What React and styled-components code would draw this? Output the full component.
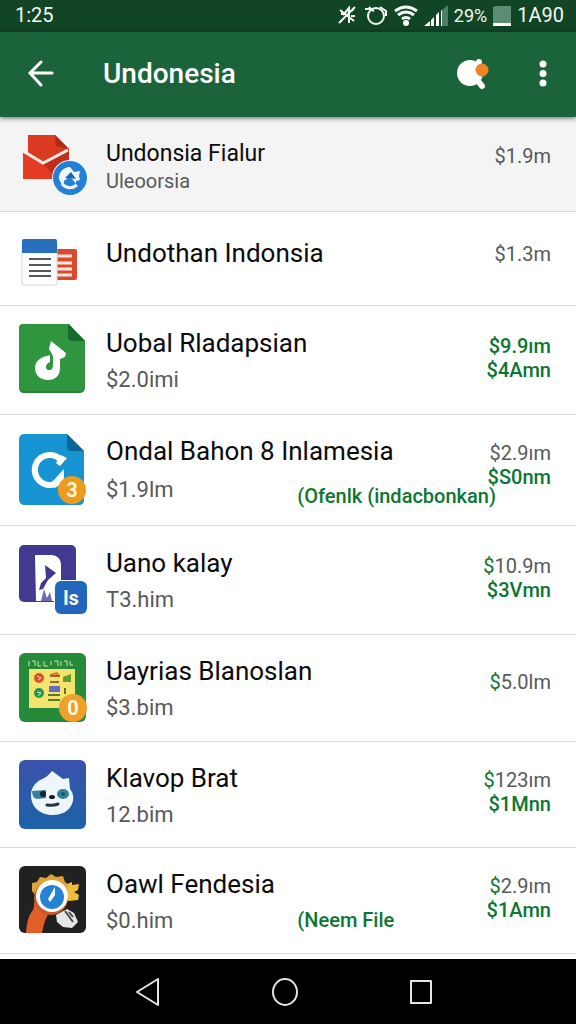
import styled, { createGlobalStyle, css } from 'styled-components';

const palette = {
  status: '#124426',
  header: '#1b643b',
  line: '#d8d9da',
  text: '#0b0b0b',
  sub: '#58595b',
  green: '#0b7632',
};

// icons
const MailIcon = () => (
  <Picture viewBox="0 0 72 72" aria-hidden="true">
    <path d="M10 1h27l14 14v24H10z" fill="#dc3a20" />
    <path d="M37 1l14 14-13-3z" fill="#a92c1b" />
    <path d="M5 17l20 13 26-14v29H5z" fill="#e33c22" />
    <path d="M25 30l26-14v29H39z" fill="#c12f1c" />
    <path d="M5 17l20 12 25-13" fill="none" stroke="#fbeeea" strokeWidth="3" />
    <circle cx="52" cy="44" r="18" fill="#f4f4f5" />
    <circle cx="52" cy="44" r="17" fill="#2380d6" />
    <path d="M41 45a11 11 0 0 1 11-12l4 5 6-1-1 5 1 4-4 1v3l-6-8-6 5-1 6z" fill="#eef8ff" />
    <path d="M44 50q7 7 15 1" fill="none" stroke="#eef8ff" strokeWidth="3" />
    <path d="M47 44l6-6 5 7-6-1z" fill="#1b64b4" />
  </Picture>
);

const NewsIcon = () => (
  <Picture viewBox="0 0 72 72" aria-hidden="true">
    <rect x="34" y="20" width="25" height="31" rx="2" fill="#d74a2d" />
    <path d="M38 27h16M38 34h16M38 40h16M38 46h16" stroke="#fbe6df" strokeWidth="3" />
    <rect x="4" y="11" width="35" height="45" rx="2" fill="#fff" stroke="#d5d7d9" />
    <path d="M4 12q0-2 2-2h31q2 0 2 2v12H4z" fill="#286fbd" />
    <path d="M11 30h22M11 36h22M11 42h22M11 47h22" stroke="#55585c" strokeWidth="2" />
  </Picture>
);

const MusicIcon = () => (
  <Picture viewBox="0 0 72 72" aria-hidden="true">
    <path d="M5 1h46l16 17v46q0 6-6 6H6q-5 0-5-6V6q0-5 4-5z" fill="#258237" />
    <path d="M5 1h45l17 17v45q0 5-5 5H6q-5 0-5-5V6q0-5 4-5z" fill="#2f963f" />
    <path d="M50 1l17 17H54q-4 0-4-4z" fill="#18692b" />
    <path
      d="M33 18l15 12-1 4-5 2v9c0 8-5 12-12 12-8 0-13-5-13-12 0-6 5-11 12-12l3-1v7c-3 1-4 3-4 5 0 2 1 3 3 3 3 0 4-2 4-5V33l-4-7z"
      fill="#fff"
    />
  </Picture>
);

const SyncIcon = () => (
  <Picture viewBox="0 0 72 72" aria-hidden="true">
    <path d="M6 2h43l17 17v49q0 5-5 5H7q-6 0-6-6V8q0-6 5-6z" fill="#1695d2" />
    <path d="M49 2l17 17H53q-4 0-4-4z" fill="#0a6795" />
    <path d="M43 28a15 15 0 1 0-6 24" fill="none" stroke="#fff" strokeWidth="6" />
    <path d="M43 23l6 3-7 8-4-3zM46 37v13l-9 6-5-4z" fill="#fff" />
    <circle cx="54" cy="58" r="14" fill="#eb9b20" />
    <BadgeText x="54" y="65" textAnchor="middle">3</BadgeText>
  </Picture>
);

const RibbonIcon = () => (
  <Picture viewBox="0 0 72 72" aria-hidden="true">
    <rect x="1" y="2" width="57" height="57" rx="5" fill="#403b91" />
    <path d="M17 12h15c8 0 11 4 11 11v35H18z" fill="#fff" />
    <path d="M27 22l11 8-8 7-5 9-4 1 2-7 5-5z" fill="#403b91" />
    <path d="M26 46l-3 12h11l-2-9-3 6z" fill="#6f6cb0" />
    <rect x="36" y="37" width="34" height="35" rx="7" fill="#f4f7fc" />
    <rect x="37" y="38" width="32" height="33" rx="6" fill="#2168bd" />
    <BadgeText x="53" y="62" textAnchor="middle">ls</BadgeText>
  </Picture>
);

const BoardIcon = () => (
  <Picture viewBox="0 0 72 72" aria-hidden="true">
    <rect x="1" y="1" width="67" height="69" rx="6" fill="#268a3a" />
    <path d="M11 9v5M14 9h3v5M20 9v5h3M26 9v5h4M33 9v4M36 9h4v5M43 9v5M46 9h3v5M52 9v4h3" fill="none" stroke="#c9e6b4" />
    <rect x="11" y="17" width="46" height="39" fill="#f3e36f" />
    <circle cx="21" cy="26" r="5" fill="#d95125" />
    <circle cx="21" cy="41" r="5" fill="#249457" />
    <path d="M19 24l4 2-3 2M19 40l4 1-3 3" stroke="#f7e6b1" fill="none" />
    <path d="M32 22l7-2 3 3-10 1z" fill="#df7b28" />
    <path d="M32 24h10M32 30h9" stroke="#9b642e" strokeWidth="2" />
    <path d="M45 25l8-3v8h-8z" fill="#5aa22c" />
    <rect x="31" y="34" width="11" height="6" fill="#656bc0" />
    <path d="M30 43h12M30 48h12M47 36v6" stroke="#5c752f" strokeWidth="2" />
    <circle cx="55" cy="56" r="14" fill="#eda02a" />
    <BadgeText x="55" y="63" textAnchor="middle">0</BadgeText>
  </Picture>
);

const SlothIcon = () => (
  <Picture viewBox="0 0 72 72" aria-hidden="true">
    <defs>
      <linearGradient id="sloth" x1="0" y1="0" x2="0" y2="1">
        <stop offset="0" stopColor="#3c52ab" />
        <stop offset="1" stopColor="#1c63a9" />
      </linearGradient>
    </defs>
    <rect x="1" y="1" width="67" height="69" rx="6" fill="url(#sloth)" />
    <path d="M34 12l11 8 6-1 1 11c4 5 4 10 2 15-3 7-10 11-19 11-12 0-22-7-22-20 0-7 4-12 9-15 5-2 8-4 12-9z" fill="#edf7fb" />
    <path d="M14 32l14-1v8l-9 1q-5-1-5-8z" fill="#367e9b" />
    <ellipse cx="45" cy="35" rx="6" ry="5" fill="#347f9e" />
    <circle cx="25" cy="35" r="3" fill="#14232f" />
    <circle cx="45" cy="35" r="2" fill="#1b5876" />
    <ellipse cx="34" cy="38" rx="3" ry="2" fill="#101820" />
    <path d="M29 46q6 1 11-1" fill="none" stroke="#26363f" strokeWidth="3" strokeLinecap="round" />
  </Picture>
);

const CompassIcon = () => (
  <Picture viewBox="0 0 72 72" aria-hidden="true">
    <rect x="1" y="1" width="67" height="67" rx="6" fill="#202120" />
    <path d="M18 33c-3 4-1 9-3 12-5 6-6 13-7 23h16c2-9 3-14 7-20z" fill="#e35d29" />
    <path d="M14 26v-8l5-1 3-5 6 1 5-4 5 3 7-1 2 6 5 4v12H20z" fill="#e0a33a" />
    <path d="M49 19l5-2v3l7-1-1 6-4 2 5 3-1 5-10 1z" fill="#edbd3c" />
    <path d="M38 50l11-6 7 4 4 9-6 6-9-1-6-5z" fill="#e7e7e6" />
    <path d="M47 46l8 11M51 47l4 5" stroke="#4a4a4a" strokeWidth="2" />
    <circle cx="33" cy="33" r="17" fill="#c65a2c" />
    <circle cx="34" cy="31" r="16" fill="#fff" />
    <circle cx="34" cy="32" r="12" fill="#2583d5" />
    <path d="M37 22l-7 12 2 3 5-7z" fill="#fff" />
  </Picture>
);

const ROWS = [
  { title: 'Undonsia Fialur', sub: 'Uleoorsia', amounts: ['$1.9m'], icon: MailIcon, kind: 'compact' },
  { title: 'Undothan Indonsia', amounts: ['$1.3m'], icon: NewsIcon, kind: 'single' },
  { title: 'Uobal Rladapsian', sub: '$2.0imi', amounts: ['$9.9ım', '$4Amn'], icon: MusicIcon, kind: 'roomy', tone: 'all' },
  {
    title: 'Ondal Bahon 8 Inlamesia',
    sub: '$1.9lm',
    note: '(Ofenlk (indacbonkan)',
    amounts: ['$2.9ım', '$S0nm'],
    icon: SyncIcon,
    kind: 'noted',
  },
  { title: 'Uano kalay', sub: 'T3.him', amounts: ['$10.9m', '$3Vmn'], icon: RibbonIcon, kind: 'roomy', tone: 'sign' },
  { title: 'Uayrias Blanoslan', sub: '$3.bim', amounts: ['$5.0lm'], icon: BoardIcon, tone: 'sign' },
  { title: 'Klavop Brat', sub: '12.bim', amounts: ['$123ım', '$1Mnn'], icon: SlothIcon, kind: 'tight', tone: 'sign' },
  {
    title: 'Oawl Fendesia',
    sub: '$0.him',
    note: '(Neem File',
    amounts: ['$2.9ım', '$1Amn'],
    icon: CompassIcon,
    kind: 'tight',
    tone: 'sign',
  },
];

const StatusIcons = () => (
  <StatusGroup>
    <StatusIcon width="20" height="24" viewBox="0 0 20 24" aria-hidden="true">
      <path d="M2 7l14 11M1 20L17 4M5 12l6-7v15M14 8l2-3M13 13h4M4 8v4" />
    </StatusIcon>
    <StatusIcon width="24" height="24" viewBox="0 0 24 24" aria-hidden="true">
      <circle cx="12" cy="13" r="8" />
      <path d="M1 6h5l4 2M16 4l6 4v5M5 4l3 3" />
    </StatusIcon>
    <StatusIcon width="24" height="24" viewBox="0 0 24 24" aria-hidden="true">
      <path d="M1 8q11-8 22 0M4 12q8-6 16 0M8 16q4-3 8 0" strokeWidth="3" />
      <circle cx="12" cy="20" r="3" fill="#fff" stroke="none" />
    </StatusIcon>
    <StatusIcon width="24" height="24" viewBox="0 0 24 24" aria-hidden="true">
      <path d="M17 8l7-6v21h-7z" fill="#4b8064" stroke="none" />
      <path d="M0 23l6-5v5zM7 17l3-3v9H7zM12 12l3-3v14h-3zM17 8l1-1v16h-1z" fill="#fff" stroke="none" />
    </StatusIcon>
    <Battery>29%</Battery>
    <StatusIcon width="18" height="24" viewBox="0 0 18 24" aria-hidden="true">
      <path d="M0 4l3-1h15v17H0z" fill="#5b8d73" stroke="none" />
      <path d="M0 20h18v3H0z" fill="#fff" stroke="none" />
    </StatusIcon>
    <span>1A90</span>
  </StatusGroup>
);

const Row = ({ title, sub, note, amounts, icon: Icon, kind, tone }) => (
  <Item $kind={kind}>
    <Icon />
    <Details $kind={kind}>
      <Title $kind={kind}>{title}</Title>
      {sub && (
        <SubLine $kind={kind}>
          <span>{sub}</span>
          {note && <Note $kind={kind}>{note}</Note>}
        </SubLine>
      )}
    </Details>
    <Amounts $kind={kind} $alone={amounts.length === 1}>
      <Amount $green={tone === 'all'}>
        {tone === 'sign' ? <Sign>$</Sign> : '$'}
        {amounts[0].slice(1)}
      </Amount>
      {amounts[1] && <Amount $green>{amounts[1]}</Amount>}
    </Amounts>
  </Item>
);

const App = () => (
  <>
    <GlobalStyle />
    <Layout>
      <StatusBar>
        <span>1:25</span>
        <StatusIcons />
      </StatusBar>
      <Header>
        <IconButton type="button" aria-label="Back">
          <svg width="28" height="28" viewBox="0 0 28 28" fill="none" stroke="#fff" strokeWidth="3" strokeLinecap="round">
            <path d="M25 13H4M14 2L3 13l11 12" />
          </svg>
        </IconButton>
        <HeaderTitle>Undonesia</HeaderTitle>
        <IconButton type="button" aria-label="Search">
          <svg width="34" height="34" viewBox="0 0 34 34">
            <circle cx="14" cy="16" r="13" fill="#fff" />
            <path d="M22 24l4 5" stroke="#fff" strokeWidth="6" strokeLinecap="round" />
            <circle cx="23" cy="5" r="3" fill="#fff" />
            <circle cx="26" cy="13" r="6.5" fill="#ee8424" />
          </svg>
        </IconButton>
        <IconButton type="button" aria-label="More options">
          <svg width="8" height="28" viewBox="0 0 8 28" fill="#fff">
            <circle cx="4" cy="4" r="3.5" />
            <circle cx="4" cy="13.5" r="3.5" />
            <circle cx="4" cy="23" r="3.5" />
          </svg>
        </IconButton>
      </Header>
      <List>
        {ROWS.map(row => (
          <Row key={row.title} {...row} />
        ))}
      </List>
      <NavBar>
        <IconButton type="button" aria-label="Navigate back">
          <NavIcon viewBox="0 0 28 28" aria-hidden="true">
            <path d="M23 1v26L2 14z" />
          </NavIcon>
        </IconButton>
        <IconButton type="button" aria-label="Home">
          <NavIcon viewBox="0 0 28 28" aria-hidden="true">
            <ellipse cx="14" cy="14" rx="12" ry="13" />
          </NavIcon>
        </IconButton>
        <IconButton type="button" aria-label="Recent apps">
          <NavIcon viewBox="0 0 28 28" aria-hidden="true">
            <path d="M4 3h20v22H4z" />
          </NavIcon>
        </IconButton>
      </NavBar>
    </Layout>
  </>
);

const GlobalStyle = createGlobalStyle`
  * {
    box-sizing: border-box;
  }

  body {
    margin: 0;
    background-color: #fff;
    font-family: Roboto, 'Liberation Sans', sans-serif;
  }
`;

const Layout = styled.div`
  display: flex;
  flex-direction: column;
  min-height: 100vh;
`;

const StatusBar = styled.div`
  display: flex;
  align-items: center;
  justify-content: space-between;
  height: 32px;
  padding: 0 12px 2px 15px;
  background-color: ${palette.status};
  color: #f2f8f4;
  font-size: 20px;
`;

const StatusGroup = styled.div`
  display: flex;
  align-items: center;
  gap: 6px;
`;

const StatusIcon = styled.svg`
  fill: none;
  stroke: #f2f8f4;
  stroke-width: 2;
`;

const Battery = styled.span`
  font-size: 18px;
`;

const Header = styled.header`
  position: relative;
  display: flex;
  align-items: center;
  height: 85px;
  padding: 0 9px 2px 17px;
  background-color: ${palette.header};
  box-shadow: 0 1px 5px rgba(0, 0, 0, 0.6);
`;

const HeaderTitle = styled.h1`
  flex: 1;
  margin: 0 0 0 38px;
  color: #fff;
  font-size: 28px;
  font-weight: 500;
`;

const IconButton = styled.button`
  display: flex;
  align-items: center;
  justify-content: center;
  min-width: 48px;
  height: 48px;
  padding: 0;
  border: 0;
  background: none;
  cursor: pointer;

  ${HeaderTitle} + & {
    margin-right: 22px;
  }
`;

const List = styled.ul`
  flex: 1;
  margin: 0;
  padding: 0;
  list-style: none;
`;

const Item = styled.li`
  display: grid;
  grid-template-columns: 72px 1fr auto;
  column-gap: 16px;
  align-items: start;
  padding: 0 25px 0 18px;
  border-bottom: 1px solid ${palette.line};
  background-color: ${({ $kind }) => ($kind === 'compact' ? '#f4f4f5' : '#fff')};
`;

const Picture = styled.svg`
  grid-area: 1 / 1;
  width: 72px;
  height: 74px;
  margin-top: 16px;
  overflow: visible;
`;

const BadgeText = styled.text`
  fill: #fff6dc;
  font-size: 20px;
  font-weight: 700;
`;

const detailPadding = {
  compact: '23px 0 17px',
  single: '25px 0 36px',
  roomy: '21px 0 15px',
  tight: '20px 0 13px',
};

const amountPadding = {
  compact: 27,
  single: 30,
  roomy: 28,
};

// runs under the amounts so that a long note can reach them
const Details = styled.div`
  grid-area: 1 / 2 / 2 / 4;
  min-width: 0;
  padding: ${({ $kind }) => detailPadding[$kind] || '20px 0 14px'};
`;

const Title = styled.h2`
  margin: 0;
  color: ${palette.text};
  font-size: 26px;
  font-weight: 400;
  line-height: 32px;
  white-space: nowrap;

  ${({ $kind }) =>
    $kind === 'compact' &&
    css`
      font-size: 23px;
      line-height: 28px;
    `}
`;

const SubLine = styled.div`
  display: grid;
  grid-template-columns: 43% 1fr;
  align-items: center;
  height: ${({ $kind }) => ($kind === 'noted' ? 44 : 40)}px;
  color: ${palette.sub};
  font-size: 22px;

  ${({ $kind }) =>
    $kind === 'compact' &&
    css`
      height: 26px;
      font-size: 20px;
    `}
`;

const Note = styled.span`
  padding-top: ${({ $kind }) => ($kind === 'noted' ? 14 : 0)}px;
  color: ${palette.green};
  font-size: 20px;
  font-weight: 500;
  line-height: 20px;
  white-space: nowrap;
`;

const Amounts = styled.div`
  grid-area: 1 / 3;
  padding-top: ${({ $kind, $alone }) => amountPadding[$kind] || ($alone ? 35 : 26)}px;
  text-align: right;
`;

const Amount = styled.div`
  color: ${({ $green }) => ($green ? palette.green : palette.sub)};
  font-size: 20px;
  font-weight: ${({ $green }) => ($green ? 500 : 400)};
  line-height: 24px;
`;

const Sign = styled.span`
  color: ${palette.green};
`;

const NavBar = styled.nav`
  display: grid;
  grid-template-columns: repeat(3, 1fr);
  align-items: center;
  justify-items: center;
  height: 65px;
  padding: 0 15% 0 14%;
  background-color: #000;
`;

const NavIcon = styled.svg`
  width: 28px;
  height: 28px;
  fill: none;
  stroke: #e4e4e4;
  stroke-width: 2;
  stroke-linejoin: round;
`;

export default App;
